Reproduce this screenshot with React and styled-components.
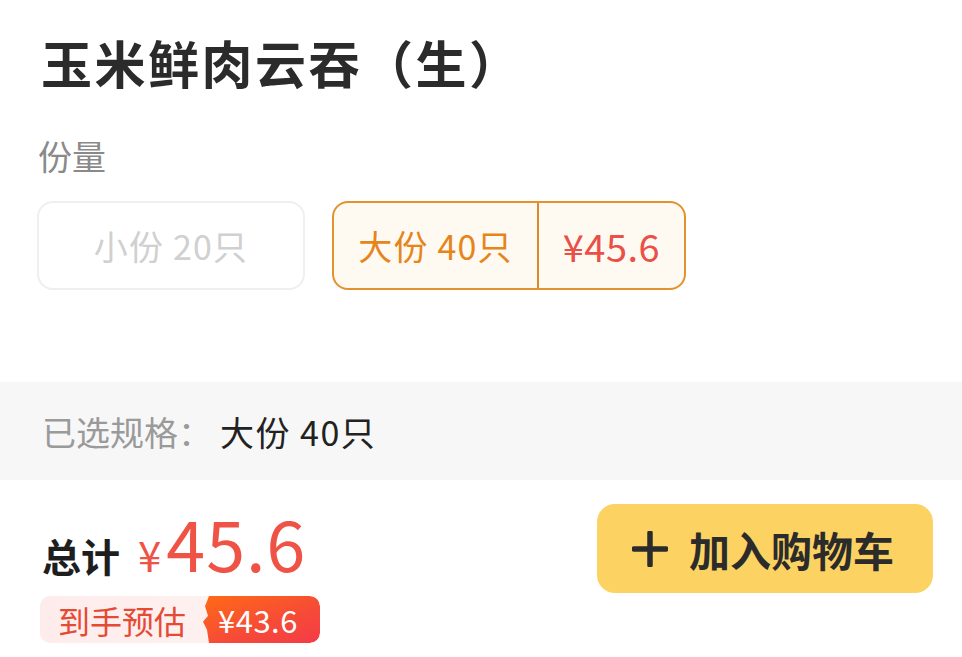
import styled, { createGlobalStyle } from 'styled-components'

const Global = createGlobalStyle`
  html, body { margin: 0; padding: 0; background: #fff; }
  body { font-family: "Noto Sans CJK SC", Roboto, sans-serif; }
`

const App = () => {
    return (
        <Page>
            <Global />
            <Header>
                <Title>玉米鲜肉云吞（生）</Title>
                <Label>份量</Label>
                <Options>
                    <Option>小份 20只</Option>
                    <Option selected>
                        <OptName>大份 40只</OptName>
                        <OptPrice>¥45.6</OptPrice>
                    </Option>
                </Options>
            </Header>
            <Chosen>
                <ChosenLabel>已选规格：</ChosenLabel>
                <ChosenValue>大份 40只</ChosenValue>
            </Chosen>
            <Footer>
                <TotalColumn>
                    <TotalRow>
                        <TotalLabel>总计</TotalLabel>
                        <Yen>¥</Yen>
                        <Amount>45.6</Amount>
                    </TotalRow>
                    <Badge>
                        <BadgeText>到手预估</BadgeText>
                        <BadgePrice>¥43.6</BadgePrice>
                    </Badge>
                </TotalColumn>
                <CartButton>
                    <svg width="36" height="36" viewBox="0 0 36 36">
                        <path d="M18 2v32M2 18h32" stroke="#2b2b2b" strokeWidth="5.5" strokeLinecap="round" />
                    </svg>
                    加入购物车
                </CartButton>
            </Footer>
        </Page>
    )
}

const Page = styled.div`
  width: 962px;
  height: 657px;
  overflow: hidden;
  display: flex;
  flex-direction: column;
`
const Header = styled.section`
  padding: 30px 0 0 37px;
  height: 382px;
  box-sizing: border-box;
`
const Title = styled.h1`
  margin: 0 0 0 4px;
  font-size: 51px;
  line-height: 64px;
  font-weight: 700;
  color: #2b2b2b;
  letter-spacing: 2.5px;
`
const Label = styled.div`
  margin: 42px 0 0 1px;
  font-size: 34px;
  line-height: 40px;
  color: #8a8a8a;
`
const Options = styled.div`
  margin-top: 25px;
  display: flex;
  gap: 27px;
`
const Option = styled.div`
  height: 89px;
  box-sizing: border-box;
  border-radius: 16px;
  display: flex;
  align-items: stretch;
  font-size: 34px;
  letter-spacing: 1.2px;
  border: 2px solid ${p => (p.selected ? '#e3922d' : '#efefef')};
  background: ${p => (p.selected ? '#fffaf1' : '#fff')};
  color: #d0d0d0;
  ${p => !p.selected && `
    width: 268px;
    justify-content: center;
    align-items: center;
  `}
`
const OptName = styled.span`
  display: flex;
  align-items: center;
  justify-content: center;
  width: 203px;
  color: #e5851c;
  border-right: 2px solid #d98a2e;
`
const OptPrice = styled.span`
  display: flex;
  align-items: center;
  justify-content: center;
  width: 145px;
  color: #ea4f48;
  font-size: 38px;
  letter-spacing: 0.5px;
`
const Chosen = styled.section`
  height: 98px;
  background: #f7f7f7;
  display: flex;
  align-items: center;
  padding-left: 42px;
  font-size: 34px;
`
const ChosenLabel = styled.span`
  color: #9a9a9a;
  width: 178px;
`
const ChosenValue = styled.span`
  color: #222;
  letter-spacing: 1.5px;
`
const Footer = styled.section`
  flex: 1;
  display: flex;
  justify-content: space-between;
  padding: 24px 29px 0 40px;
`
const TotalColumn = styled.div`
  display: flex;
  flex-direction: column;
  padding-top: 1px;
`
const TotalRow = styled.div`
  display: flex;
  align-items: baseline;
  height: 91px;
  padding-left: 2px;
`
const TotalLabel = styled.span`
  font-size: 39px;
  font-weight: 700;
  color: #1e1e1e;
  margin-right: 18px;
`
const Yen = styled.span`
  font-size: 42px;
  color: #ef5346;
  margin-right: 5px;
`
const Amount = styled.span`
  font-size: 70px;
  color: #ef5346;
  line-height: 74px;
  letter-spacing: 1px;
`
const Badge = styled.div`
  display: flex;
  height: 47px;
  width: 280px;
  border-radius: 10px;
  background: linear-gradient(90deg, #fdeceb, #fff4f2);
  overflow: hidden;
`
const BadgeText = styled.span`
  display: flex;
  align-items: center;
  padding-left: 18px;
  width: 145px;
  font-size: 32px;
  color: #e54a35;
`
const BadgePrice = styled.span`
  flex: 1;
  display: flex;
  align-items: center;
  padding-left: 15px;
  font-size: 31px;
  letter-spacing: 0.5px;
  color: #fff;
  border-radius: 0 10px 10px 0;
  background: linear-gradient(160deg, #ff6a16 0%, #f64a38 60%, #f53b47 100%);
  clip-path: polygon(6px 0, 100% 0, 100% 100%, 6px 100%, 4px 72%, 0 55%, 5px 42%, 2px 22%);
`
const CartButton = styled.button`
  width: 336px;
  height: 89px;
  border: none;
  border-radius: 18px;
  background: #fcd262;
  display: flex;
  align-items: center;
  justify-content: center;
  gap: 21px;
  font-family: inherit;
  font-size: 41px;
  font-weight: 700;
  color: #2b2b2b;
  padding: 0 4px 0 0;
`

export default App
